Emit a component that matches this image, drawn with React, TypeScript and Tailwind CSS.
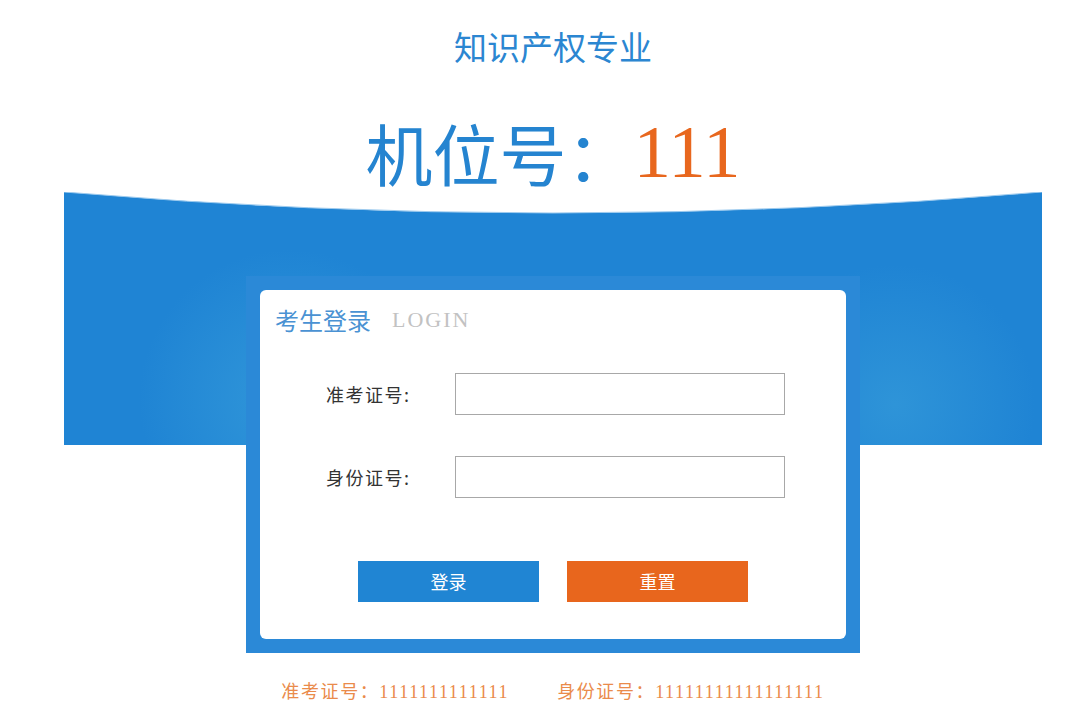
import React from "react";

const serif = "font-['Liberation_Serif','Noto_Sans_CJK_SC',serif]";
const sans = "font-['Noto_Sans_CJK_SC','Liberation_Sans',sans-serif]";

function Row({ label }: { label: string }) {
  return (
    <div className="flex items-center pl-[66px]">
      <div className={`w-[129px] text-[18px] leading-[24px] tracking-[1.5px] text-[#333333] ${sans}`}>{label}</div>
      <input className="w-[330px] h-[42px] border border-[#a8a8a8] bg-white outline-none" />
    </div>
  );
}

export default function App() {
  return (
    <div className={`w-[1080px] h-[703px] bg-white overflow-hidden ${sans}`}>
      <div className="ml-[64px] w-[978px] flex flex-col items-center">
        <h1 className="mt-[29px] text-[33px] leading-[34px] text-[#2b86d1]">知识产权专业</h1>
        <div className="mt-[49px] h-[80px] flex items-center leading-[80px]">
          <span className="text-[67px] text-[#2584d0] font-normal">机位号：</span>
          <span className={`text-[75px] text-[#e8671e] ${serif}`}>111</span>
        </div>

        <div className="relative w-full">
          {/* banner background */}
          <div className="absolute inset-x-0 top-0 h-[253px] bg-[#1f84d4] bg-[radial-gradient(circle_at_23%_82%,rgba(52,154,218,0.85)_0%,rgba(31,132,212,0)_150px),radial-gradient(circle_at_85%_84%,rgba(50,152,217,0.8)_0%,rgba(31,132,212,0)_140px)] overflow-hidden">
            <svg className="absolute left-0 top-0" width="978" height="24" viewBox="0 0 978 24" preserveAspectRatio="none">
              <path d="M0 0 L978 0 Q489 42 0 0 Z" fill="#ffffff" />
              <path d="M0 0 Q489 42 978 0" fill="none" stroke="#9ccaee" strokeWidth="1" />
            </svg>
          </div>

          <div className="relative pt-[84px] flex flex-col items-center">
            <div className="w-[614px] p-[14px] bg-[#2b89d7]">
              <div className="h-[349px] bg-white rounded-[6px] flex flex-col">
                <div className="pt-[18px] pl-[15px] flex items-center h-[42px]">
                  <span className="text-[24px] leading-[24px] text-[#4a92d3]">考生登录</span>
                  <span className={`ml-[21px] text-[22px] leading-[24px] text-[#c2c2c2] tracking-[2px] ${serif}`}>LOGIN</span>
                </div>
                <div className="mt-[41px] flex flex-col gap-[41px]">
                  <Row label="准考证号:" />
                  <Row label="身份证号:" />
                </div>
                <div className="mt-[63px] flex justify-center gap-[28px]">
                  <button className="w-[181px] h-[41px] bg-[#2085d3] text-white text-[18px]">登录</button>
                  <button className="w-[181px] h-[41px] bg-[#e8661d] text-white text-[18px]">重置</button>
                </div>
              </div>
            </div>

            <div className={`mt-[27px] flex gap-[48px] text-[18px] leading-[24px] tracking-[1.6px] text-[#ea8b4b] ${serif}`}>
              <span>准考证号：1111111111111</span>
              <span>身份证号：11111111111111111</span>
            </div>
          </div>
        </div>
      </div>
    </div>
  );
}
